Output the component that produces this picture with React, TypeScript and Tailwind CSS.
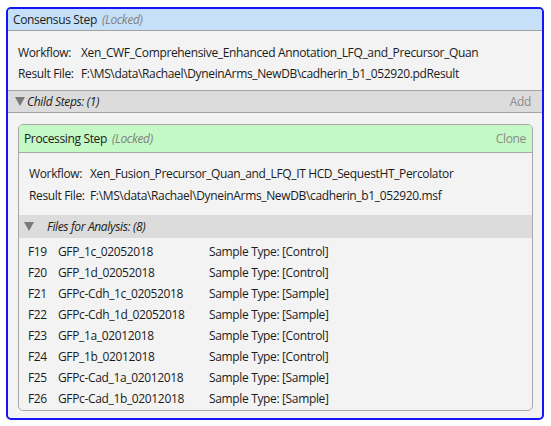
import React from 'react'

const files = [
  ['F19', 'GFP_1c_02052018', 'Control'],
  ['F20', 'GFP_1d_02052018', 'Control'],
  ['F21', 'GFPc-Cdh_1c_02052018', 'Sample'],
  ['F22', 'GFPc-Cdh_1d_02052018', 'Sample'],
  ['F23', 'GFP_1a_02012018', 'Control'],
  ['F24', 'GFP_1b_02012018', 'Control'],
  ['F25', 'GFPc-Cad_1a_02012018', 'Sample'],
  ['F26', 'GFPc-Cad_1b_02012018', 'Sample'],
]

function Tri() {
  return (
    <svg width="10" height="9" viewBox="0 0 10 9" className="shrink-0">
      <polygon points="0,0 10,0 5,9" fill="#7a7a7a" />
    </svg>
  )
}

export default function App() {
  return (
    <div
      className="min-h-screen bg-white pt-[7px] pl-[6px] text-[12px] tracking-[-0.35px] text-[#1b1b1b]"
      style={{ fontFamily: '"Open Sans", "Noto Sans", sans-serif' }}
    >
      <div className="w-[538px] h-[413px] border-2 border-[#1414f5] rounded-[5px] overflow-hidden flex flex-col bg-[#f3f3f3]">
        {/* consensus header */}
        <div className="h-[22px] bg-[#c6e0f9] border-b border-[#a3a3a3] flex items-center pl-[5px]">
          <span>Consensus Step</span>
          <span className="italic text-[#808080] ml-[5px]">(Locked)</span>
        </div>

        <div className="pt-[11px] pb-[6px] pl-[10px] border-b border-[#a3a3a3]">
          <div className="flex h-[21px] items-center">
            <span className="w-[63px] shrink-0">Workflow:</span>
            <span>Xen_CWF_Comprehensive_Enhanced Annotation_LFQ_and_Precursor_Quan</span>
          </div>
          <div className="flex h-[21px] items-center">
            <span className="w-[63px] shrink-0">Result File:</span>
            <span>F:\MS\data\Rachael\DyneinArms_NewDB\cadherin_b1_052920.pdResult</span>
          </div>
        </div>

        <div className="h-[22px] bg-[#dcdcdc] border-b border-[#a3a3a3] flex items-center pl-[7px] pr-[11px]">
          <Tri />
          <span className="italic ml-[2px]">Child Steps: (1)</span>
          <span className="ml-auto text-[#8a8a8a]">Add</span>
        </div>

        {/* processing step card */}
        <div className="mt-[11px] ml-[10px] mr-[9px] border border-[#a8a8a8] rounded-[5px] overflow-hidden bg-[#f3f3f3] flex flex-col">
          <div className="h-[28px] bg-[#c4f8c4] border-b border-[#a8a8a8] flex items-center pl-[5px] pr-[6px]">
            <span>Processing Step</span>
            <span className="italic text-[#808080] ml-[5px]">(Locked)</span>
            <span className="ml-auto text-[#8a8a8a]">Clone</span>
          </div>

          <div className="pt-[10px] pb-[8px] pl-[10px]">
            <div className="flex h-[22px] items-center">
              <span className="w-[61px] shrink-0">Workflow:</span>
              <span>Xen_Fusion_Precursor_Quan_and_LFQ_IT HCD_SequestHT_Percolator</span>
            </div>
            <div className="flex h-[22px] items-center">
              <span className="w-[61px] shrink-0">Result File:</span>
              <span>F:\MS\data\Rachael\DyneinArms_NewDB\cadherin_b1_052920.msf</span>
            </div>
          </div>

          <div className="h-[23px] bg-[#dcdcdc] flex items-center pl-[5px]">
            <Tri />
            <span className="italic ml-[13px]">Files for Analysis: (8)</span>
          </div>

          <div className="pt-[3px] pb-[1px] pl-[9px]">
            {files.map(([id, name, type]) => (
              <div key={id} className="flex h-[21px] items-center">
                <span className="w-[30px] shrink-0">{id}</span>
                <span className="w-[151px] shrink-0">{name}</span>
                <span>Sample Type: [{type}]</span>
              </div>
            ))}
          </div>
        </div>
      </div>
    </div>
  )
}
